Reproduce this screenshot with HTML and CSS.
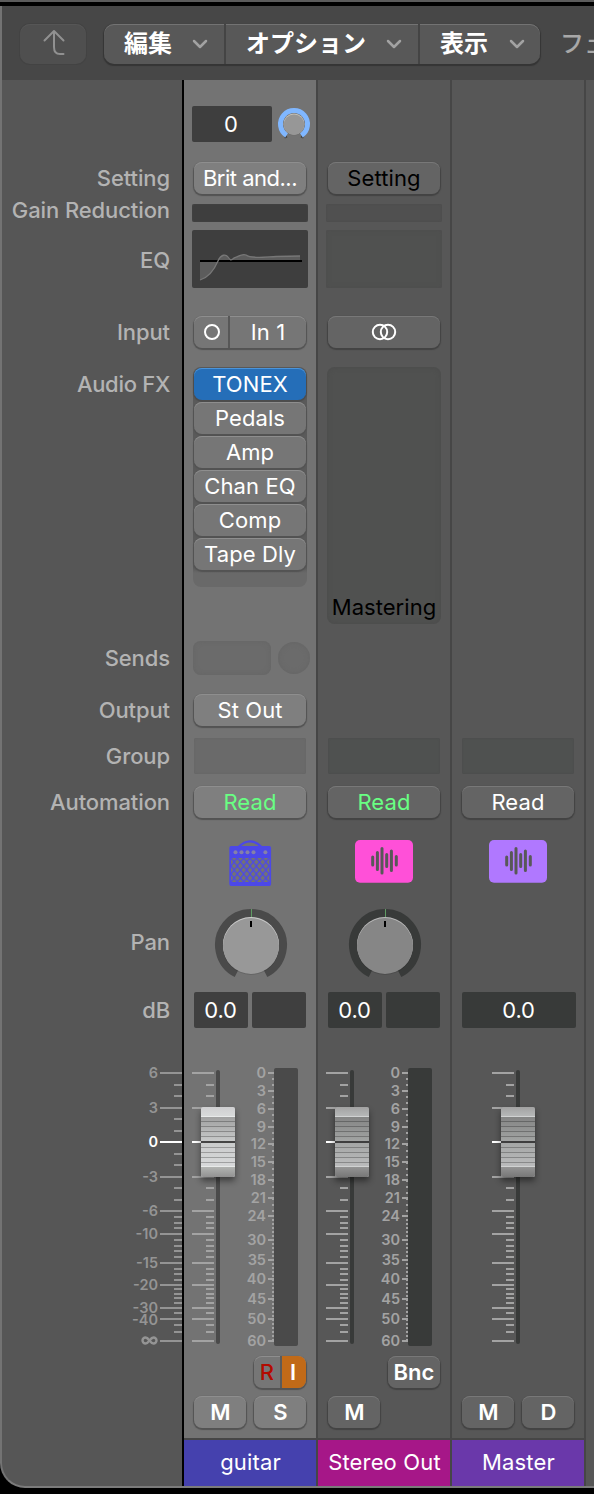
FILE: index.html
```html
<!DOCTYPE html>
<html lang="ja">
<head>
<meta charset="utf-8">
<title>Mixer</title>
<link rel="stylesheet" href="styles.css">
</head>
<body>
<svg class="defs" width="0" height="0">
  <defs>
    <g id="minor"><path d="M0 1085h8M0 1096h8M0 1119h8M0 1131h8M0 1154h8M0 1165h8M0 1188h8M0 1200h8M0 1217h8M0 1223h8M0 1228h8M0 1240h8M0 1246h8M0 1251h8M0 1257h8M0 1269h8M0 1274h8M0 1280h8M0 1289h8M0 1294h8M0 1298h8M0 1303h8M0 1313h8M0 1325h8M0 1332h8"/></g>
    <g id="scale">
      <path d="M0 1073h22M0 1108h22M0 1177h22M0 1211h22M0 1234h22M0 1263h22M0 1285h22M0 1308h22M0 1319h22M0 1341h22"/>
      <use href="#minor" x="14"/>
      <path class="zero" d="M0 1142h22"/>
    </g>
    <g id="meter">
      <rect class="well" x="274" y="1068" width="24" height="278" rx="2"/>
      <path class="tick" d="M268 1073h6M268 1091h6M268 1109h6M268 1127h6M268 1144h6M268 1162h6M268 1180h6M268 1198h6M268 1216h6M268 1240h6M268 1260h6M268 1279h6M268 1299h6M268 1319h6M268 1341h6"/>
      <path class="tick" d="M273 1072V1216" stroke-dasharray="2 4"/>
      <path class="tick" d="M273 1219V1342" stroke-dasharray="2 2"/>
      <g class="nums">
        <text x="266" y="1078">0</text><text x="266" y="1096">3</text><text x="266" y="1114">6</text><text x="266" y="1132">9</text><text x="266" y="1149">12</text><text x="266" y="1167">15</text><text x="266" y="1185">18</text><text x="266" y="1203">21</text><text x="266" y="1221">24</text><text x="266" y="1245">30</text><text x="266" y="1265">35</text><text x="266" y="1284">40</text><text x="266" y="1304">45</text><text x="266" y="1324">50</text><text x="266" y="1346">60</text>
      </g>
    </g>
    <linearGradient id="ga" x2="0" y2="1"><stop offset="0" stop-color="#8f8f8f"/><stop offset=".5" stop-color="#c9cbcb"/><stop offset="1" stop-color="#dedfe1"/></linearGradient>
    <linearGradient id="gb" x2="0" y2="1"><stop offset="0" stop-color="#777"/><stop offset=".5" stop-color="#a3a5a4"/><stop offset="1" stop-color="#c5c5c7"/></linearGradient>
    <linearGradient id="ea" x2="0" y2="1"><stop offset="0" stop-color="#cfcfd1"/><stop offset="1" stop-color="#d9dbdb"/></linearGradient>
    <linearGradient id="eb" x2="0" y2="1"><stop offset="0" stop-color="#a2a2a2"/><stop offset="1" stop-color="#b8baba"/></linearGradient>
    <linearGradient id="fa" x2="0" y2="1"><stop offset="0" stop-color="#b2b4b2"/><stop offset="1" stop-color="#929292"/></linearGradient>
    <linearGradient id="fb" x2="0" y2="1"><stop offset="0" stop-color="#949494"/><stop offset="1" stop-color="#777"/></linearGradient>
    <path id="ribs" d="M201 1121.500h34M201 1126.500h34M201 1131.500h34M201 1136.500h34M201 1147.500h34M201 1152.500h34M201 1157.500h34M201 1162.500h34" stroke="#000" stroke-opacity=".25" fill="none"/>
    <g id="cap-a">
      <rect x="201" y="1107" width="34" height="70" rx="2" fill="url(#ga)"/>
      <path d="M201 1117v-8q0-2 2-2h30q2 0 2 2v8z" fill="url(#ea)"/>
      <path d="M201 1167h34v8q0 2-2 2h-30q-2 0-2-2z" fill="url(#fa)"/>
      <path d="M201 1116.500h34M201 1166.500h34" stroke="#e8eaea"/>
      <use href="#ribs"/><path d="M201 1142h34" stroke="#454545" stroke-width="2"/>
    </g>
    <g id="cap-b">
      <rect x="201" y="1107" width="34" height="70" rx="2" fill="url(#gb)"/>
      <path d="M201 1117v-8q0-2 2-2h30q2 0 2 2v8z" fill="url(#eb)"/>
      <path d="M201 1167h34v8q0 2-2 2h-30q-2 0-2-2z" fill="url(#fb)"/>
      <path d="M201 1116.500h34M201 1166.500h34" stroke="#d0d2d2"/>
      <use href="#ribs"/><path d="M201 1142h34" stroke="#3e3e3e" stroke-width="2"/>
    </g>
    <g id="wave" fill="none" stroke="#585858" stroke-width="3" stroke-linecap="round"><path d="M17.700 17v8M22.400 12.500v17M27 8.500v24.500M31.700 14.500v12M36.400 11v19.500M41.300 16.500v8.500"/></g>
    <pattern id="grill" x="231" y="858" width="6.330" height="8" patternUnits="userSpaceOnUse"><path d="M-1-1.260L7.330 9.260M7.330-1.260L-1 9.260" stroke="#4c48e8" stroke-width="1.300"/></pattern>
    <g id="knob">
      <path d="M236.500 973.500A32 32 0 1 1 265.500 973.500" fill="none" stroke="currentColor" stroke-width="8"/>
      <path d="M251.500 909v8" stroke="#5f9a63"/>
    </g>
  </defs>
</svg>
<div class="window">
  <header class="toolbar">
    <button class="back"><svg width="24" height="28" viewBox="0 0 24 28"><path d="M2.500 11.500L12 2l9.500 9.500M12 3v15q0 7 6 7h3.500"/></svg></button>
    <nav class="menus">
      <button class="menu m1">編集<svg width="16" height="10" viewBox="0 0 16 10"><path d="M2 2l6 6 6-6"/></svg></button>
      <button class="menu m2">オプション<svg width="16" height="10" viewBox="0 0 16 10"><path d="M2 2l6 6 6-6"/></svg></button>
      <button class="menu m3">表示<svg width="16" height="10" viewBox="0 0 16 10"><path d="M2 2l6 6 6-6"/></svg></button>
    </nav>
    <span class="fader-menu">フェ</span>
  </header>
  <main class="mixer">
    <section class="col labels">
      <div></div>
      <div>Setting</div>
      <div class="l-gr">Gain Reduction</div>
      <div class="l-eq">EQ</div>
      <div>Input</div>
      <div class="l-fx">Audio FX</div>
      <div>Sends</div>
      <div>Output</div>
      <div>Group</div>
      <div>Automation</div>
      <div></div>
      <div>Pan</div>
      <div>dB</div>
      <svg class="fader" viewBox="0 1032 182 322" width="182" height="322">
        <use href="#scale" x="160" class="ticks side"/>
        <g class="nums side-nums">
          <text x="158" y="1078">6</text><text x="158" y="1113">3</text><text x="158" y="1147" class="on">0</text><text x="158" y="1182">-3</text><text x="158" y="1216">-6</text><text x="158" y="1239">-10</text><text x="158" y="1268">-15</text><text x="158" y="1290">-20</text><text x="158" y="1313">-30</text><text x="158" y="1324.500">-40</text>
        </g>
        <path class="inf" d="M149.500 1340.500c-1.500-2-2.500-3-4-3a3 3 0 0 0 0 6c1.500 0 2.500-1 4-3s2.500-3 4-3a3 3 0 0 1 0 6c-1.500 0-2.500-1-4-3z"/>
      </svg>
    </section>

    <section class="col strip selected">
      <div class="gain"><span class="field">0</span>
        <svg width="36" height="36" viewBox="276 106 36 36"><path d="M287 136.500l-2.500 1M301 136.500l2.500 1" stroke="#444" stroke-width="2"/><circle cx="294" cy="124.500" r="10.800" fill="#6a6a6a"/><path d="M286.600 135.300A13.500 13.500 0 1 1 301.400 135.300" fill="none" stroke="#80b7ff" stroke-width="5"/><circle cx="294" cy="124" r="10.500" fill="#c4c0b8"/><circle cx="294" cy="124.700" r="10.300" fill="#979797"/></svg>
      </div>
      <div class="row"><button class="btn light tight">Brit and...</button></div>
      <div class="gr"><i></i></div>
      <div class="eq"><svg width="116" height="58" viewBox="192 230 116 58"><path d="M200 280C210 277 215 268 218 261C221 254 226 254 228 257C230 260 231 261 234 258C238 257 242 253 246 255C251 259 265 257 276 256.500Q290 256 300 256V261H200z" fill="#5c5c5c"/><path d="M200 261h102" stroke="#000" stroke-width="2"/><path d="M200 280C210 277 215 268 218 261C221 254 226 254 228 257C230 260 231 261 234 258C238 257 242 253 246 255C251 259 265 257 276 256.500Q290 256 300 256" fill="none" stroke="#777" stroke-width="1.300"/></svg></div>
      <div class="row"><button class="btn split"><span class="mono"><svg width="16" height="16" viewBox="0 0 16 16"><circle cx="8" cy="8" r="7"/></svg></span><span class="src">In 1</span></button></div>
      <div class="fx"><div class="rack">
        <button class="btn plug active">TONEX</button>
        <button class="btn plug">Pedals</button>
        <button class="btn plug">Amp</button>
        <button class="btn plug">Chan EQ</button>
        <button class="btn plug">Comp</button>
        <button class="btn plug">Tape Dly</button>
      </div></div>
      <div class="sends"><i class="slot"></i><i class="dot"></i></div>
      <div class="row"><button class="btn light">St Out</button></div>
      <div class="row"><i class="group"></i></div>
      <div class="row"><button class="btn light green">Read</button></div>
      <svg width="132" height="68" viewBox="184 828 132 68">
        <path d="M238.500 847q11.500-11.500 23 0" fill="none" stroke="#4c48e8" stroke-width="2.200"/>
        <rect x="229.300" y="846" width="41.800" height="40" rx="2" fill="#4c48e8"/>
        <rect x="231" y="858" width="38.300" height="24" fill="#737373"/>
        <rect x="231" y="858" width="38.300" height="24" fill="url(#grill)"/>
        <g fill="#8580a8"><circle cx="235.500" cy="852.300" r="2"/><circle cx="241.500" cy="852.300" r="2"/><circle cx="247.500" cy="852.300" r="2"/><circle cx="253.500" cy="852.300" r="2"/><circle cx="265.400" cy="852.300" r="2"/></g>
      </svg>
      <svg width="132" height="92" viewBox="184 896 132 92" color="#4a4a4a">
        <use href="#knob"/><circle cx="251" cy="947" r="28" fill="#000" opacity=".12"/><circle cx="251" cy="945" r="28" fill="#cdcdcd"/><circle cx="251" cy="946" r="28" fill="#989898"/><path d="M251 921v6" stroke="#000" stroke-width="2"/>
      </svg>
      <div class="db"><span>0.0</span><span></span></div>
      <svg class="fader" width="132" height="322" viewBox="184 1032 132 322">
        <use href="#scale" x="192" class="ticks"/>
        <rect class="well" x="216" y="1070" width="4" height="274" rx="2"/>
        <use href="#cap-a" class="cap"/>
        <use href="#meter"/>
      </svg>
      <div class="row end"><button class="btn ri"><span class="rec">R</span><span class="mon">I</span></button></div>
      <div class="ms"><button class="btn light bold">M</button><button class="btn light bold">S</button></div>
      <div class="name blue">guitar</div>
    </section>

    <section class="col strip">
      <div></div>
      <div class="row"><button class="btn black">Setting</button></div>
      <div class="gr"><i></i></div>
      <div class="eq"><i></i></div>
      <div class="row"><button class="btn"><svg class="stereo" width="26" height="18" viewBox="0 0 26 18"><circle cx="9" cy="9" r="7.200"/><circle cx="17" cy="9" r="7.200"/></svg></button></div>
      <div class="fx"><div class="empty">Mastering</div></div>
      <div></div>
      <div></div>
      <div class="row"><i class="group"></i></div>
      <div class="row"><button class="btn green">Read</button></div>
      <div class="row icon"><svg width="58" height="43" viewBox="0 0 58 43"><rect width="58" height="42.700" rx="5" fill="#ff50d8"/><use href="#wave"/></svg></div>
      <svg width="132" height="92" viewBox="184 896 132 92" color="#383a39">
        <use href="#knob"/><circle cx="251" cy="947" r="28" fill="#000" opacity=".12"/><circle cx="251" cy="945" r="28" fill="#bcbcbc"/><circle cx="251" cy="946" r="28" fill="#868686"/><path d="M251 921v6" stroke="#000" stroke-width="2"/>
      </svg>
      <div class="db"><span>0.0</span><span></span></div>
      <svg class="fader" width="132" height="322" viewBox="184 1032 132 322">
        <use href="#scale" x="192" class="ticks"/>
        <rect class="well" x="216" y="1070" width="4" height="274" rx="2"/>
        <use href="#cap-b" class="cap"/>
        <use href="#meter"/>
      </svg>
      <div class="row end"><button class="btn bnc">Bnc</button></div>
      <div class="ms"><button class="btn bold">M</button></div>
      <div class="name magenta">Stereo Out</div>
    </section>

    <section class="col strip">
      <div></div><div></div><div></div><div></div><div></div><div></div><div></div><div></div>
      <div class="row"><i class="group"></i></div>
      <div class="row"><button class="btn">Read</button></div>
      <div class="row icon"><svg width="58" height="43" viewBox="0 0 58 43"><rect width="58" height="42.700" rx="5" fill="#b078ff"/><use href="#wave"/></svg></div>
      <div></div>
      <div class="db wide"><span>0.0</span></div>
      <svg class="fader" width="132" height="322" viewBox="184 1032 132 322">
        <use href="#scale" x="224" class="ticks"/>
        <rect class="well" x="248" y="1070" width="4" height="274" rx="2"/>
        <use href="#cap-b" x="32" class="cap"/>
      </svg>
      <div></div>
      <div class="ms"><button class="btn bold">M</button><button class="btn bold">D</button></div>
      <div class="name purple">Master</div>
    </section>
  </main>
</div>
</body>
</html>
```

FILE: styles.css
```css
* { box-sizing: border-box; }
body {
  margin: 0;
  width: 594px;
  height: 1494px;
  overflow: hidden;
  background: #000;
  color: #fff;
  font: 22px/26px Inter, "Noto Sans CJK JP", sans-serif;
  border-top: 2px solid #5c5c5c;
  padding-top: 4px;
}
button { font: inherit; color: inherit; border: 0; padding: 0; margin: 0; }
svg { display: block; }
.defs { position: absolute; }
.window {
  height: 1482px;
  border-left: 2px solid #737373;
  border-bottom: 2px solid #7b7b7b;
  border-bottom-left-radius: 25px;
  background: #565656;
  overflow: hidden;
}

.toolbar {
  height: 74px;
  background: #474747;
  padding: 18px 0 0 18px;
  display: flex;
  align-items: flex-start;
  font-family: "Noto Sans CJK JP", sans-serif;
  font-size: 24px;
  white-space: nowrap;
  overflow: hidden;
}
.back {
  flex: none;
  width: 66px;
  height: 40px;
  border-radius: 10px;
  background: #4f4f4f;
  box-shadow: 0 0 0 1px #434343, inset 0 1px #565656;
  display: grid;
  place-items: center;
}
.back svg { fill: none; stroke: #919191; stroke-width: 2; stroke-linecap: round; stroke-linejoin: round; margin: -3px 0 0 1px; }
.menus {
  flex: none;
  display: flex;
  margin-left: 18px;
  height: 40px;
  border-radius: 10px;
  background: #585858;
  box-shadow: inset 0 1px #737373, 0 1px 1px 1px #353535;
}
.menu {
  background: none;
  display: flex;
  align-items: center;
  justify-content: space-between;
  padding: 0 16px 4px 20px;
  font-weight: 700;
}
.menu svg { fill: none; stroke: #a2a2a2; stroke-width: 2.500; stroke-linecap: round; stroke-linejoin: round; margin-top: 4px; }
.menu + .menu { border-left: 2px solid #444; }
.m1 { width: 120px; }
.m2 { width: 194px; }
.m3 { width: 122px; padding-right: 15px; }
.fader-menu { margin: 3px 0 0 20px; line-height: 30px; color: #a8a8a8; font-weight: 500; }

.mixer {
  display: grid;
  grid-template-columns: 182px 134px 134px 134px 1fr;
}
.col {
  display: grid;
  grid-template-rows: 80px 36px 30px 72px 68px 266px 52px 52px 40px 52px 68px 92px 44px 322px 36px 44px 54px;
  height: 1408px;
  min-width: 0;
}
.labels {
  border-right: 2px solid #000;
  color: #b3b3b3;
  font-weight: 500;
  letter-spacing: -.1px;
  text-align: right;
  white-space: nowrap;
}
.labels > div { padding-right: 12px; align-self: center; }
.labels .l-gr { padding-bottom: 2px; }
.labels .l-eq { align-self: start; padding-top: 21px; }
.labels .l-fx { align-self: start; padding-top: 5px; letter-spacing: -.3px; }
.labels svg { margin-left: -2px; }

.strip { border-right: 2px solid #464646; background: #575757; white-space: nowrap; }
.selected { background: #737373; }
.row { display: flex; align-items: center; justify-content: center; }
.row.end { justify-content: flex-end; padding-right: 10px; }
.row.icon { padding-bottom: 1px; }

.btn {
  width: 112px;
  height: 32px;
  border-radius: 8px;
  background: #646464;
  box-shadow: inset 0 1px #787878, 0 1px 1px 1px #434343;
  letter-spacing: .1px;
  display: flex;
  align-items: center;
  justify-content: center;
  overflow: hidden;
}
.selected .btn { background: #767676; box-shadow: inset 0 1px #8e8e8e, 0 1px 1px 1px #535353; }
.selected .btn.light { background: #7f7f7f; }
.btn.tight { letter-spacing: -.5px; }
.btn.black { color: #000; }
.btn.green, .selected .btn.green { color: #69ff83; }
.btn.bold { width: 52px; font-weight: 600; padding-left: 1px; }
.btn.bnc { width: 52px; font-weight: 600; letter-spacing: 0; }
.btn svg { fill: none; stroke: #fff; stroke-width: 2; }

.gain { padding: 26px 0 0 8px; display: flex; align-items: flex-start; gap: 4px; }
.field {
  width: 80px;
  height: 36px;
  border-radius: 2px;
  background: #3e3e3e;
  text-align: center;
  line-height: 37px;
  padding-right: 2px;
}
.gr { padding: 8px 0 0 8px; }
.gr i { display: block; width: 116px; height: 18px; border-radius: 2px; background: #505050; box-shadow: inset 0 0 2px #4a4a4a; }
.selected .gr i { background: #3e3e3e; }
.eq { padding: 4px 0 0 8px; }
.eq i { display: block; width: 116px; height: 58px; border-radius: 2px; background: #505150; box-shadow: inset 0 0 5px #4d4d4d; }
.eq svg { background: #3e3e3e; border-radius: 2px; }
.split .mono { width: 36px; height: 32px; border-right: 2px solid #575757; display: grid; place-items: center; padding-left: 1px; }
.split .src { flex: 1; }
.fx { padding: 1px 0 0 9px; }
.rack {
  width: 114px;
  height: 220px;
  padding: 1px;
  border-radius: 8px;
  background: linear-gradient(#5a5a5a 200px, #696969 206px);
  display: flex;
  flex-direction: column;
  gap: 2px;
}
.selected .btn.active { background: #256eb8; box-shadow: inset 0 1px #4b94da, 0 1px 1px 1px #4c4c4c; }
.empty {
  width: 114px;
  height: 257px;
  border-radius: 8px;
  background: #505150;
  box-shadow: inset 0 0 5px #4b4b4b;
  color: #000;
  display: flex;
  align-items: flex-end;
  justify-content: center;
  padding-bottom: 4px;
  letter-spacing: .05px;
}
.sends { display: flex; align-items: center; padding-left: 9px; gap: 7px; }
.slot { width: 78px; height: 34px; border-radius: 8px; background: #6b6b6b; box-shadow: inset 0 0 5px #656565; }
.dot { width: 32px; height: 32px; border-radius: 50%; background: #6b6b6b; box-shadow: inset 0 0 5px #656565; }
.group { width: 112px; height: 36px; border-radius: 2px; background: #4f5150; box-shadow: inset 0 0 2px #4a4a4a; }
.selected .group { background: #6a6a6a; box-shadow: inset 0 0 2px #626262; }

.db { display: flex; gap: 4px; align-items: center; padding-left: 10px; }
.db span { width: 54px; height: 36px; border-radius: 2px; background: #383a39; text-align: center; line-height: 37px; padding-right: 1px; letter-spacing: -.2px; }
.db.wide span { width: 114px; }
.selected .db span { background: #3f3f3f; }

.ticks, .tick { stroke: #a3a3a3; stroke-width: 2; fill: none; }
.ticks.side { stroke: #949494; }
.zero { stroke: #fff; }
.selected .fader { --well: #4a4a4a; }
.well { fill: var(--well, #383a39); }
.cap { filter: drop-shadow(0 4px 3px rgba(0, 0, 0, .45)); }
.nums { fill: #a3a3a3; font: 600 14.500px Inter, sans-serif; letter-spacing: 0; text-anchor: end; }
.side-nums { fill: #949494; }
.nums .on { fill: #fff; }
.inf { fill: none; stroke: #949494; stroke-width: 2.400; }

.ri span { flex: 1; height: 32px; line-height: 32px; }
.selected .ri { width: 52px; }
.selected .ri .rec { flex: 0 0 28px; color: #b30b00; border-right: 2px solid #5b5b5b; font-weight: 500; }
.ri .mon { background: #c16a18; font-weight: 600; padding-right: 2px; }
.ms { display: flex; gap: 8px; align-items: center; padding-left: 10px; }
.name { border-top: 2px solid #464646; margin-top: 4px; text-align: center; line-height: 45px; letter-spacing: .15px; padding-left: 1px; }
.name.blue { background: #4541ae; }
.name.magenta { background: #a61788; }
.name.purple { background: #6a38aa; }
```
